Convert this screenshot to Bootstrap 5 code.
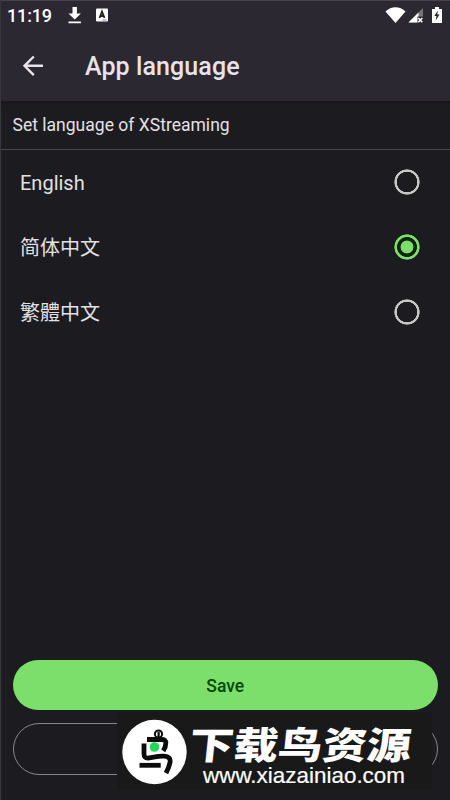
<!DOCTYPE html>
<html lang="en" data-bs-theme="dark">
<head>
<meta charset="utf-8">
<meta name="viewport" content="width=device-width, initial-scale=1">
<title>App language</title>
<link href="https://cdn.jsdelivr.net/npm/bootstrap@5.3.0/dist/css/bootstrap.min.css" rel="stylesheet">
<style>
body{font-family:Roboto,"Noto Sans CJK SC",sans-serif;background:#1c1b1f;color:#e4e1e3}
.screen{height:800px;border-left:1px solid #37363b;overflow:hidden}
.app-head{height:101px;background:#2c2831;border-top:1px solid #47444b;box-shadow:0 1px 2px #151417}
.status{height:31px;padding-left:6px;color:#fff}
.clock{font-size:18px;line-height:30px;font-weight:500;width:46px;letter-spacing:-.15px}
.title-row{height:68px;padding-left:20px}
.title-row h1{font-size:25px;font-weight:500;line-height:30px;padding:2px 0 0 39px;letter-spacing:.09px;color:#e8e2ea}
.subtitle{height:49px;padding:1px 0 0 11.5px;font-size:17.55px;border-bottom:1px solid #47464a}
.lang{height:65px;padding:0 30px 2px 19px;font-size:20px;cursor:pointer}
.lang span{padding-top:2px}
.pick{appearance:none;width:26px;height:26px;border:0;border-radius:50%;margin:0;background:radial-gradient(circle,transparent 10px,#c8c6c4 10.500px 12.300px,transparent 13px)}
.pick:checked{background:radial-gradient(circle,#7ddf6b 0 6px,#10250f 6.800px 9.600px,#7ddf6b 10.300px 12.300px,transparent 13px)}
.actions{padding:0 12px 25px 11.5px}
.pill{height:50px;border-radius:26px;font-size:17.5px;font-weight:500}
.pill-save{margin-bottom:13px}
.pill-save,.pill-save:hover{background:#7cdf6b;color:#06480b}
.pill-save span{position:relative;top:1px}
.pill-line{height:52px;border:1px solid #89868a;border-radius:27px}
.stamp{left:117px;top:712px;width:315px;height:78px;background:#191919}
</style>
</head>
<body>
<main class="screen d-flex flex-column position-relative">
  <header class="app-head flex-shrink-0">
    <div class="status d-flex">
      <span class="clock">11:19</span>
      <svg width="64" height="31" viewBox="53 1 64 31">
        <path d="M72.500 7h4.400v6.500h4L74.700 19.500l-6.200-6h4zM68.500 21.500h12.400v1.800H68.500z" fill="#fff"/>
        <rect x="96" y="8.500" width="12" height="13" rx="1" fill="#fff"/>
        <path d="M99.500 18 102 11.500l2.500 6.500M100 16h4" fill="none" stroke="#222" stroke-width="1.800"/>
        <path d="M102.500 20h4" stroke="#888"/>
      </svg>
      <svg class="ms-auto" width="66" height="31" viewBox="384 1 66 31">
        <path d="M385.500 11.500c5.500-5.800 14.500-5.800 20 0L395.500 23z" fill="#fff"/>
        <path d="M423 8v14.500h-14.500z" fill="#77747a"/><path d="M418.500 12.500v10h-10z" fill="#fff"/>
        <path d="M417.500 16.500h6.500v6.500h-6.500z" fill="#2c2831"/><path d="m418.300 18 4 4.200m0-4.200-4 4.200" stroke="#fff" stroke-width="1.500"/>
        <path d="M435 7h4v2h3v14h-10V9h3z" fill="#fff"/><path d="M437.800 10.500 434.300 16h2.200l-.8 4.500 3.900-6h-2.300z" fill="#29262e"/>
      </svg>
    </div>
    <div class="title-row d-flex align-items-center">
      <svg width="25" height="24" viewBox="21 53.500 25 24" fill="none" stroke="#e8e2ea" stroke-width="2.400"><path d="M43 65.300H24.500M33.800 56l-9.300 9.300 9.300 9.300"/></svg>
      <h1 class="mb-0">App language</h1>
    </div>
  </header>
  <div class="subtitle d-flex align-items-center flex-shrink-0">Set language of XStreaming</div>
  <div>
    <label class="lang d-flex align-items-center justify-content-between"><span>English</span><input class="pick" type="radio" name="lang"></label>
    <label class="lang d-flex align-items-center justify-content-between" lang="zh-CN"><span>简体中文</span><input class="pick" type="radio" name="lang" checked></label>
    <label class="lang d-flex align-items-center justify-content-between" lang="zh-TW"><span>繁體中文</span><input class="pick" type="radio" name="lang"></label>
  </div>
  <div class="actions mt-auto d-grid">
    <button class="btn pill pill-save border-0 p-0" type="button"><span>Save</span></button>
    <button class="btn pill pill-line p-0" type="button" aria-label="Cancel"></button>
  </div>
  <svg class="stamp position-absolute" style="margin-left:-1px" viewBox="117 712 315 78">
    <circle cx="154.500" cy="752" r="32.200" fill="#fff"/>
    <g fill="none" stroke="#0b0b0b" stroke-width="4.800" stroke-linejoin="round">
      <path d="M147 739.500h14.500q4.500 0 4.300 3.600 0 4-2.500 7.700"/>
      <path d="M144 743.500v10.500q0 4.200 4 4.100l7-1.200q5-1 9-.7 7.200.5 6 6.300-1 5-4 10.700"/>
      <path d="M139.500 765.300h21.200"/>
      <circle cx="158.500" cy="734" r="3.600" stroke-width="2"/>
    </g>
    <path d="M157.500 732h2.200v6h-2.200z" fill="#0b0b0b"/>
    <circle cx="154.500" cy="747" r="4.800" fill="#22d957"/>
    <text transform="translate(188 758.500) skewX(-6)" font-family="'Noto Sans CJK SC',sans-serif" font-size="37.500" font-weight="900" fill="#fff" textLength="222" lengthAdjust="spacingAndGlyphs">下载鸟资源</text>
    <text x="203" y="783" font-family="'Liberation Sans',Arial,sans-serif" font-size="22" fill="#fff" stroke="#fff" stroke-width=".2" textLength="202" lengthAdjust="spacingAndGlyphs">www.xiazainiao.com</text>
  </svg>
</main>
<script src="https://cdn.jsdelivr.net/npm/bootstrap@5.3.0/dist/js/bootstrap.bundle.min.js"></script>
</body>
</html>
